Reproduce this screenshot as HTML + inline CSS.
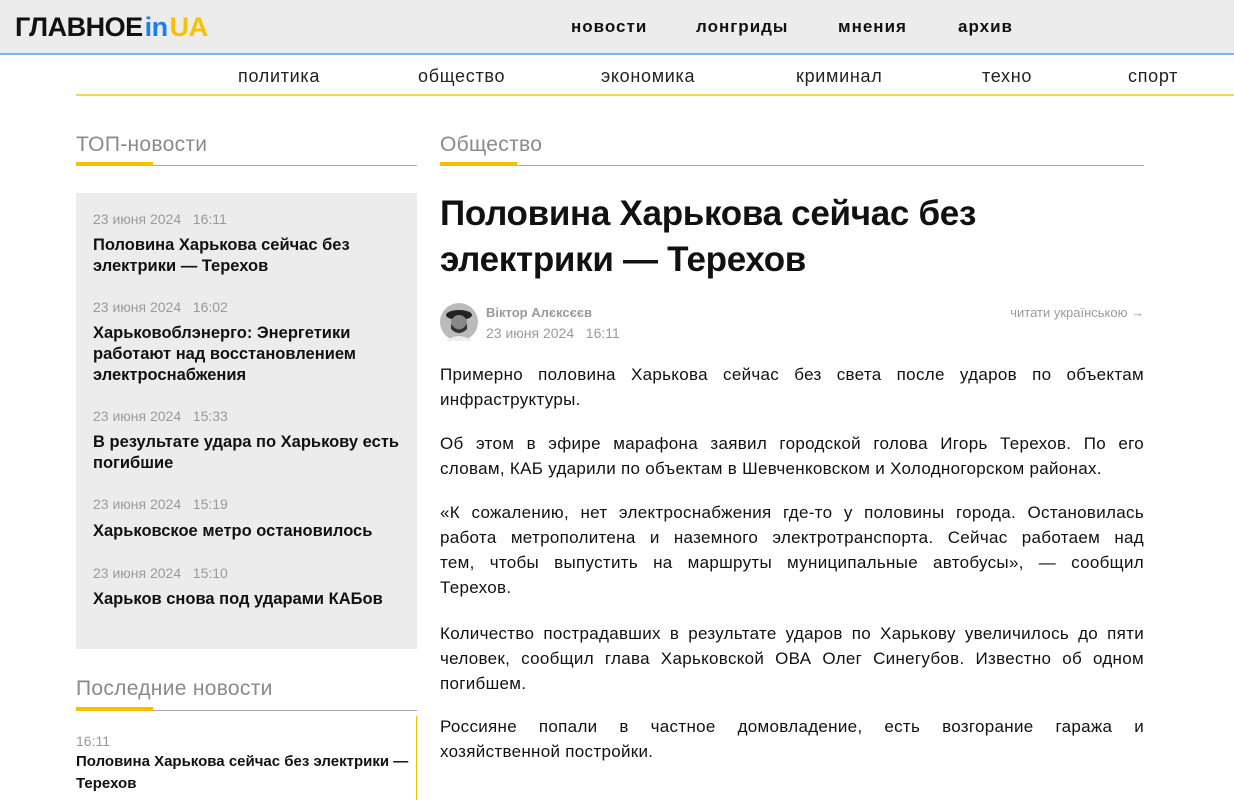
<!DOCTYPE html>
<html><head><meta charset="utf-8">
<style>
*{margin:0;padding:0;box-sizing:border-box}
body{width:1234px;height:800px;overflow:hidden;background:#fff;font-family:"Liberation Sans",sans-serif;color:#111;position:relative}
.a{position:absolute}
.hdr{left:0;top:0;width:1234px;height:55px;background:#ececec;border-bottom:2px solid #7fb4ea}
.logo{left:15px;top:12px;font-size:27px;font-weight:bold;letter-spacing:-0.5px}
.nav{top:17px;font-size:17px;font-weight:bold;color:#111;letter-spacing:1px}
.sub{top:66px;font-size:18px;color:#222;letter-spacing:0.7px}
.h2{font-size:21px;color:#8a8a8a;letter-spacing:0.3px}
.rule{height:1px;background:#aaa}
.yb{height:4px;background:#f6c200}
.box{left:76px;top:193px;width:341px;height:456px;background:#ececec}
.d{font-size:14px;color:#9a9a9a}
.t{font-size:16.5px;font-weight:bold;line-height:21px;color:#111}
.p{left:440px;width:704px;font-size:17px;line-height:25px;color:#111;letter-spacing:0.3px}
.p div{text-align:justify;text-align-last:justify;white-space:nowrap}
.p div.l{text-align-last:left}
</style></head><body>
<div class="a hdr"></div>
<div class="a logo">ГЛАВНОЕ<span style="color:#1a7ff0;margin-left:2px">in</span><span style="color:#f6c200;margin-left:2px">UA</span></div>
<div class="a nav" style="left:571px">новости</div>
<div class="a nav" style="left:696px">лонгриды</div>
<div class="a nav" style="left:838px">мнения</div>
<div class="a nav" style="left:958px">архив</div>
<div class="a sub" style="left:238px">политика</div>
<div class="a sub" style="left:418px">общество</div>
<div class="a sub" style="left:601px">экономика</div>
<div class="a sub" style="left:796px">криминал</div>
<div class="a sub" style="left:982px">техно</div>
<div class="a sub" style="left:1128px">спорт</div>
<div class="a" style="left:76px;top:94px;width:1158px;height:2px;background:#f8d64a"></div>

<div class="a h2" style="left:76px;top:133px">ТОП-новости</div>
<div class="a rule" style="left:76px;top:165px;width:341px"></div>
<div class="a yb" style="left:76px;top:162px;width:77px"></div>
<div class="a box"></div>
<div class="a d" style="left:93px;top:211px">23 июня 2024&nbsp;&nbsp;&nbsp;16:11</div>
<div class="a t" style="left:93px;top:235px;width:310px">Половина Харькова сейчас без электрики — Терехов</div>
<div class="a d" style="left:93px;top:299px">23 июня 2024&nbsp;&nbsp;&nbsp;16:02</div>
<div class="a t" style="left:93px;top:323px;width:310px">Харьковоблэнерго: Энергетики работают над восстановлением электроснабжения</div>
<div class="a d" style="left:93px;top:408px">23 июня 2024&nbsp;&nbsp;&nbsp;15:33</div>
<div class="a t" style="left:93px;top:432px;width:310px">В результате удара по Харькову есть погибшие</div>
<div class="a d" style="left:93px;top:496px">23 июня 2024&nbsp;&nbsp;&nbsp;15:19</div>
<div class="a t" style="left:93px;top:521px;width:310px">Харьковское метро остановилось</div>
<div class="a d" style="left:93px;top:565px">23 июня 2024&nbsp;&nbsp;&nbsp;15:10</div>
<div class="a t" style="left:93px;top:589px;width:310px">Харьков снова под ударами КАБов</div>

<div class="a h2" style="left:76px;top:677px">Последние новости</div>
<div class="a rule" style="left:76px;top:710px;width:341px"></div>
<div class="a yb" style="left:76px;top:707px;width:77px"></div>
<div class="a" style="left:416px;top:716px;width:1px;height:84px;background:#f6c200"></div>
<div class="a d" style="left:76px;top:733px">16:11</div>
<div class="a t" style="left:76px;top:751px;width:335px;font-size:15px;line-height:22px">Половина Харькова сейчас без электрики — Терехов</div>

<div class="a h2" style="left:440px;top:133px">Общество</div>
<div class="a rule" style="left:440px;top:165px;width:704px"></div>
<div class="a yb" style="left:440px;top:162px;width:77px"></div>
<div class="a" style="left:440px;top:191px;width:704px;font-size:35px;font-weight:bold;line-height:46px;letter-spacing:-0.3px">Половина Харькова сейчас без электрики — Терехов</div>

<svg class="a" style="left:440px;top:303px" width="38" height="38" viewBox="0 0 38 38"><circle cx="19" cy="19" r="19" fill="#bbb"/><ellipse cx="19" cy="12" rx="13" ry="5" fill="#222"/><circle cx="19" cy="20" r="8" fill="#888"/><path d="M11 21 Q19 32 27 21 L27 26 Q19 34 11 26Z" fill="#333"/><path d="M6 38 Q19 28 32 38Z" fill="#eee"/></svg>
<div class="a" style="left:486px;top:305px;font-size:13px;font-weight:bold;color:#9a9a9a">Віктор Алєксєєв</div>
<div class="a d" style="left:486px;top:325px">23 июня 2024&nbsp;&nbsp;&nbsp;16:11</div>
<div class="a" style="right:90px;top:305px;font-size:13px;color:#9a9a9a">читати українською →</div>

<div class="a p" style="top:362px"><div>Примерно половина Харькова сейчас без света после ударов по объектам</div><div class="l">инфраструктуры.</div></div>
<div class="a p" style="top:431px"><div>Об этом в эфире марафона заявил городской голова Игорь Терехов. По его</div><div class="l">словам, КАБ ударили по объектам в Шевченковском и Холодногорском районах.</div></div>
<div class="a p" style="top:500px"><div>«К сожалению, нет электроснабжения где-то у половины города. Остановилась</div><div>работа метрополитена и наземного электротранспорта. Сейчас работаем над</div><div>тем, чтобы выпустить на маршруты муниципальные автобусы», — сообщил</div><div class="l">Терехов.</div></div>
<div class="a p" style="top:621px"><div>Количество пострадавших в результате ударов по Харькову увеличилось до пяти</div><div>человек, сообщил глава Харьковской ОВА Олег Синегубов. Известно об одном</div><div class="l">погибшем.</div></div>
<div class="a p" style="top:714px"><div>Россияне попали в частное домовладение, есть возгорание гаража и</div><div class="l">хозяйственной постройки.</div></div>
</body></html>
